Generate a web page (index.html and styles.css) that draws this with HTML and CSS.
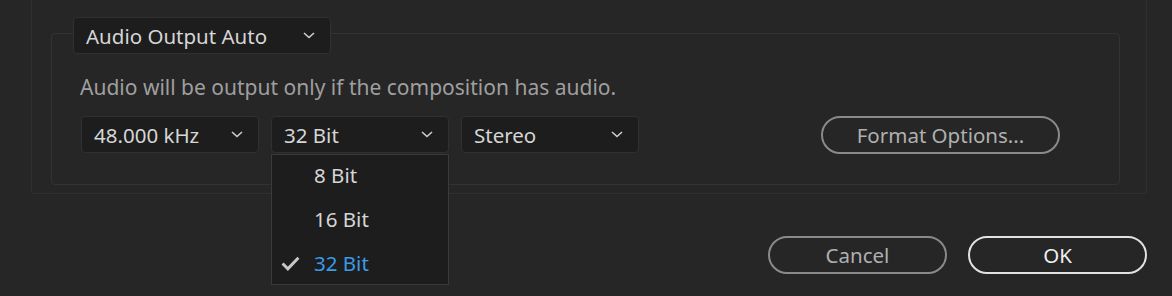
FILE: index.html
```html
<!DOCTYPE html>
<html lang="en">
<head>
    <meta charset="UTF-8">
    <title>Audio Output</title>
    <link rel="stylesheet" href="styles.css">
</head>
<body>
    <div class="panel">
        <div class="group">
            <div class="select select-head">
                <span>Audio Output Auto</span>
                <svg class="chev" viewBox="0 0 12 7"><path d="M1 1 L6 5.5 L11 1"/></svg>
            </div>
            <p class="note">Audio will be output only if the composition has audio.</p>
            <div class="row">
                <div class="select">
                    <span>48.000 kHz</span>
                    <svg class="chev" viewBox="0 0 12 7"><path d="M1 1 L6 5.5 L11 1"/></svg>
                </div>
                <div class="select open">
                    <span>32 Bit</span>
                    <svg class="chev" viewBox="0 0 12 7"><path d="M1 1 L6 5.5 L11 1"/></svg>
                    <ul class="menu">
                        <li>8 Bit</li>
                        <li>16 Bit</li>
                        <li class="checked">
                            <svg class="check" viewBox="0 0 18 14"><path d="M1.5 7 L6.5 12 L16.5 1.5"/></svg>
                            32 Bit
                        </li>
                    </ul>
                </div>
                <div class="select">
                    <span>Stereo</span>
                    <svg class="chev" viewBox="0 0 12 7"><path d="M1 1 L6 5.5 L11 1"/></svg>
                </div>
                <button class="btn btn-format">Format Options...</button>
            </div>
        </div>
    </div>
    <div class="actions">
        <button class="btn btn-cancel">Cancel</button>
        <button class="btn btn-ok">OK</button>
    </div>
</body>
</html>
```

FILE: styles.css
```css
body {
    margin: 0;
    background-color: #262626;
    font-family: "Noto Sans", "Open Sans", sans-serif;
    color: #d6d6d6;
    width: 1172px;
    height: 296px;
    overflow: hidden;
}
.panel {
    margin: -12px 0 0 31px;
    width: 1116px;
    height: 206px;
    border: 1px solid #303030;
    border-top: none;
    border-radius: 0 0 4px 4px;
    padding: 45px 0 0 19px;
    box-sizing: border-box;
}
.group {
    width: 1069px;
    height: 152px;
    border: 1px solid #333333;
    border-radius: 4px;
    box-sizing: border-box;
    padding: 0 0 0 28px;
}
.select {
    position: relative;
    display: flex;
    align-items: center;
    justify-content: space-between;
    width: 178px;
    height: 37px;
    box-sizing: border-box;
    padding: 0 15px 0 12px;
    background-color: #1d1d1d;
    border: 1px solid #303030;
    border-radius: 4px;
    font-size: 20.5px;
    color: #d6d6d6;
}
.select-head {
    width: 258px;
    margin: -17px 0 0 -7px;
    padding-left: 12px;
}
.chev {
    width: 12px;
    height: 7px;
    fill: none;
    stroke: #cfcfcf;
    stroke-width: 1.6;
}
.note {
    margin: 20px 0 0 0;
    font-size: 21px;
    color: #9f9f9f;
    line-height: 26px;
}
.row {
    display: flex;
    align-items: center;
    gap: 12px;
    margin-top: 15px;
    margin-left: 1px;
}
.btn {
    font-family: "Noto Sans", "Open Sans", sans-serif;
    font-size: 20.5px;
    height: 38px;
    background-color: #262626;
    border-radius: 19px;
    border: 2px solid #8a8a8a;
    color: #b0b0b0;
    padding: 0;
}
.btn-format {
    width: 239px;
    margin-left: 170px;
    margin-top: 1px;
}
.menu {
    position: absolute;
    top: 37px;
    left: -1px;
    width: 178px;
    margin: 0;
    padding: 0;
    list-style: none;
    background-color: #1d1d1d;
    border: 1px solid #3a3a3a;
    box-sizing: border-box;
    height: 131px;
}
.menu li {
    position: relative;
    height: 44px;
    line-height: 44px;
    padding-left: 42px;
    color: #d6d6d6;
}
.menu li:first-child {
    margin-top: -2px;
}
.menu li.checked {
    color: #3b9be6;
}
.check {
    position: absolute;
    left: 9px;
    top: 15px;
    width: 19px;
    height: 15px;
    fill: none;
    stroke: #c8c8c8;
    stroke-width: 2.8;
}
.actions {
    display: flex;
    justify-content: flex-end;
    gap: 21px;
    margin: 42px 25px 0 0;
}
.btn-cancel,
.btn-ok {
    width: 179px;
}
.btn-ok {
    border-color: #e2e2e2;
    color: #f0f0f0;
}
```
